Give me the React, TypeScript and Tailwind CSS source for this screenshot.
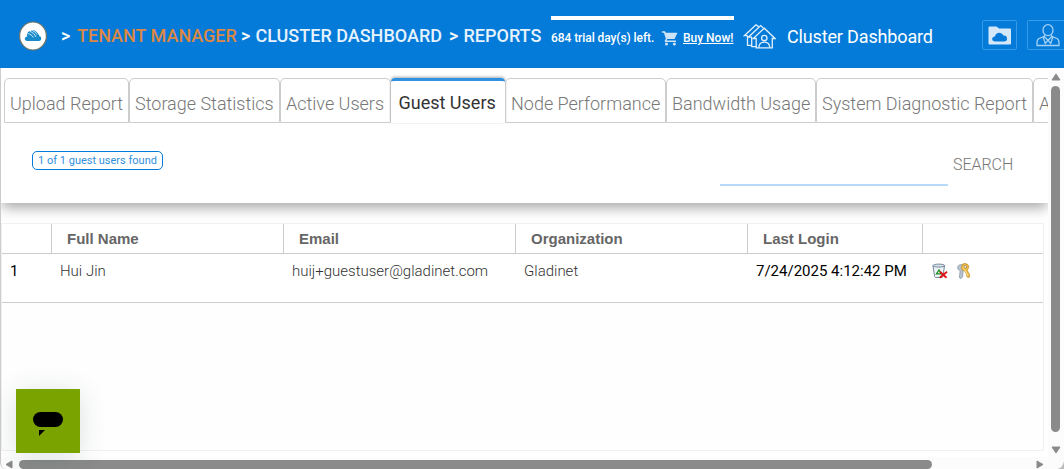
import React from "react";

const tabs = [
  { label: "Upload Report", width: "w-[125px]" },
  { label: "Storage Statistics", width: "w-[151px]" },
  { label: "Active Users", width: "w-[111px]" },
  { label: "Guest Users", width: "w-[114px]", active: true },
  { label: "Node Performance", width: "w-[161px]" },
  { label: "Bandwidth Usage", width: "w-[150px]" },
  { label: "System Diagnostic Report", width: "w-[217px]" },
  { label: "A", width: "w-[110px]" },
];

function Logo() {
  return (
    <svg width="28" height="30" viewBox="0 0 28 30" className="shrink-0">
      <ellipse cx="14" cy="15" rx="13.400" ry="14" fill="#fff" stroke="#6d7468" strokeWidth="1.200" />
      <path d="M8.300 20C4.800 20 5.200 15.600 8.200 15.500c-.8-3 1-5.800 3.700-5.500 1.300-1.300 3.700-1.100 5.100.4 2.500 2.300 3 3.100 3.500 4.900 2.200.2 2.600 4.700-.5 4.700Z" fill="#168acb" />
      <path d="M8.600 12.600c2.300.2 4.400 1.500 5.600 3.800M10.600 10.300c2.600.7 5.200 3 6.300 5.600M13.400 9.600c2 .8 3.500 2 4.700 4" fill="none" stroke="#fff" strokeWidth=".8" />
    </svg>
  );
}

function CartIcon() {
  return (
    <svg width="16" height="15" viewBox="0 0 16 15" className="shrink-0" fill="#cde4f8">
      <path d="M0 .3h3l.8 1.500h11.700l-3 6.200H5.200L4.500 9.500H14V11H3.100l-.5-1.200 1.300-2L1.900 1.700H0Z" />
      <circle cx="4.500" cy="13" r="1.500" />
      <circle cx="12.400" cy="13" r="1.500" />
    </svg>
  );
}

function HousesIcon() {
  return (
    <svg width="33" height="25" viewBox="0 0 33 25" className="shrink-0" fill="none" stroke="#e3f0fb" strokeWidth="1.300">
      <path d="M13.200 14.500h-3L21.300 4.200 32 14.500h-2.700v9.300H13.200Z" />
      <path d="M9 13.200H5.400L17.700 1.600l2.600 2.300M4.700 11.700H1.300L13 .8l2.500 1.800M4.500 12v9.300H9M8.700 13.200v9.500h4.500" />
      <circle cx="21.300" cy="14" r="2.700" />
      <path d="M15.800 23.600c.2-3.800 2.500-5.400 5.500-5.400s5.300 1.600 5.500 5.400" />
    </svg>
  );
}

function FolderIcon() {
  return (
    <svg width="23" height="19" viewBox="0 0 23 19">
      <path d="M1.500.5h7l2.500 2h11q1 0 1 1v14q0 1-1 1H1.500q-1 0-1-1v-16q0-1 1-1Z" fill="#d5e8f9" />
      <path d="M7.300 15.500c-4 0-4.200-4.500-.4-4.900C7.500 6.300 13.300 5 15.400 9.500c3-.1 4.200 2 3.500 4.300-.3 1.200-1.300 1.700-2.500 1.700Z" fill="#047bd9" />
    </svg>
  );
}

function PersonIcon() {
  return (
    <svg width="24" height="23" viewBox="0 0 24 23" fill="none" stroke="#a4d1f6" strokeWidth="1.300">
      <ellipse cx="12" cy="6.200" rx="5" ry="5.500" />
      <path d="M8.500 11v2l3.500 3.300 3.500-3.300v-2M8.500 12.300 3 14.500Q1 15.500 1 19v2.500h22V19q0-3.500-2-4.500l-5.500-2.200M7.300 13.500l2 6 2.700-3.200 2.700 3.200 2-6" />
    </svg>
  );
}

function DeleteIcon() {
  return (
    <svg width="16" height="16" viewBox="0 0 16 16" className="shrink-0">
      <path d="M1 2.800h11.500l-1.600 10.900-1 .8H3.600l-1-.8Z" fill="#eef3f6" stroke="#75879a" />
      <ellipse cx="6.800" cy="2.600" rx="5.900" ry="1.500" fill="#d5e1eb" stroke="#607388" strokeWidth=".8" />
      <path d="m7 7-2.500 3.800h4.800L7 7Z" fill="#fff" stroke="#168f20" strokeWidth="1.300" />
      <path d="m8 8.800 6.500 5.900M15 8.800 7.800 14.700" stroke="#df1418" strokeWidth="1.900" />
    </svg>
  );
}

function KeysIcon() {
  return (
    <svg width="16" height="16" viewBox="0 0 16 16" className="shrink-0">
      <path d="M7.500 2.200C4 .8 1.300 2.600 1.700 5c.2 1.500 1.400 2.400 2.500 2.600l-.8 7 1.400 1.100L6.600 14l.5-6.500L9 5Z" fill="#b8c5d0" stroke="#8495a3" strokeWidth=".8" />
      <path d="M7 .8c3.200-.8 5.600.5 5.700 2.900.1 1.600-.8 2.600-1.700 3.200l2.700 5.200-.2 2-1.700.4-1.100-1.600-.2-1.500-2-3.600C5.800 7.500 4.900 5.800 5.500 3.700Z" fill="#efbf45" stroke="#ba8429" strokeWidth=".7" />
      <path d="M7 3.500 8.500 6.500l3.500 6.500" fill="none" stroke="#ffe391" />
      <circle cx="9.300" cy="3.800" r="1.300" fill="#fff" stroke="#84632e" strokeWidth=".7" />
    </svg>
  );
}

function Header() {
  return (
    <header className="flex h-[68px] w-full shrink-0 overflow-hidden bg-[#047bd9] pl-[19px] text-white">
      <div className="flex h-[72px] w-[42px] shrink-0 items-center"><Logo /></div>
      <nav className="flex h-[71px] w-[490px] shrink-0 items-center whitespace-nowrap text-[18px] font-medium text-[#e6f2fc]">
        <span className="w-4 text-white">&gt;</span>
        <span className="w-[164px] text-[#dc8744]">TENANT MANAGER</span>
        <span className="w-[14.500px] text-white">&gt;</span>
        <span className="w-[193.500px]">CLUSTER DASHBOARD</span>
        <span className="w-[14.500px] text-white">&gt;</span>
        <span>REPORTS</span>
      </nav>
      <div className="mt-4 h-8 w-[183px] shrink-0 border-t-4 border-white">
        <div className="flex h-9 items-center whitespace-nowrap text-[12px] font-medium">
          <span className="w-[111px] tracking-[-0.070px]">684 trial day(s) left.</span>
          <CartIcon />
          <span className="ml-[5px] underline">Buy Now!</span>
        </div>
      </div>
      <div className="ml-[9px] flex h-[73px] w-[239px] shrink-0 items-center whitespace-nowrap text-[18px]">
        <HousesIcon />
        <span className="ml-[11px] tracking-[-0.150px]">Cluster Dashboard</span>
      </div>
      <div className="mt-5 flex h-[30px] w-[35px] shrink-0 items-center justify-center rounded-[2px] border border-[#359be7]"><FolderIcon /></div>
      <div className="mt-5 ml-[10px] flex h-[30px] w-[42px] shrink-0 items-center rounded-[2px] border border-[#359be7] pl-2"><PersonIcon /></div>
    </header>
  );
}

function Tabs() {
  return (
    <div className="flex h-[56px] w-full shrink-0 items-end overflow-hidden pl-[3px]">
      {tabs.map((tab) => (
        <div
          key={tab.label}
          className={`${tab.width} mb-px flex h-[45px] shrink-0 whitespace-nowrap text-[18px] ${tab.active ? "rounded-t-[4px] border-t-[3px] border-[#3092df] pl-[7.500px] pt-2 text-[#333] shadow-[0_-1px_3px_#aaa]" : "rounded-t-[5px] border border-[#ccc] pl-[5px] pt-[11px] font-light text-[#777]"}`}
        >
          {tab.label}
        </div>
      ))}
    </div>
  );
}

function GuestTable() {
  return (
    <section className="mt-5 flex h-[228px] w-[1043px] shrink-0 flex-col border border-[#f1f1f1] bg-[#fefefe] text-[15px]">
      <div className="grid h-[30px] shrink-0 grid-cols-[49px_232px_232px_232px_175px_1fr] border-b border-[#ccc] bg-white font-['Liberation_Sans'] font-bold leading-[30px] text-[#666]">
        <span />
        <span className="border-l border-[#ccc] pl-[15px]">Full Name</span>
        <span className="border-l border-[#ccc] pl-[15px]">Email</span>
        <span className="border-l border-[#ccc] pl-[15px]">Organization</span>
        <span className="border-l border-[#ccc] pl-[15px]">Last Login</span>
        <span className="border-l border-[#ccc]" />
      </div>
      <div className="grid h-[49px] shrink-0 grid-cols-[49px_232px_232px_232px_175px_1fr] border-b border-[#ccc] bg-white leading-[34px]">
        <span className="pl-2 text-black">1</span>
        <span className="pl-[9px] font-light text-[#333]">Hui Jin</span>
        <span className="pl-[9px] font-light text-[#333]">huij+guestuser@gladinet.com</span>
        <span className="pl-[9px] font-light text-[#333]">Gladinet</span>
        <span className="whitespace-nowrap pl-[9px] text-black">7/24/2025 4:12:42 PM</span>
        <span className="flex gap-2 pl-[10px] pt-[9px]"><DeleteIcon /><KeysIcon /></span>
      </div>
    </section>
  );
}

export default function App() {
  return (
    <div className="relative flex h-[469px] w-[1064px] flex-col overflow-hidden bg-[#fcfcfc] font-[Roboto]">
      <Header />
      <div className="flex h-[389px] shrink-0">
        <main className="flex w-[1048px] flex-col overflow-hidden border-l border-[#ccc] bg-white">
          <div className="relative flex h-[135px] shrink-0 flex-col bg-white shadow-[0_6px_12px_-1px_#aaa]">
            <Tabs />
            <div className="flex h-[79px]">
              <div className="ml-[31px] mt-[27px] h-[19px] w-[131px] rounded-[5px] border border-[#047bd9] text-center text-[11px] leading-[17px] text-[#2f8fdd]">1 of 1 guest users found</div>
              <div className="ml-[557px] mt-[40px] h-[22px] w-[228px] border-b-2 border-[#b6daf8]" />
              <span className="ml-[5px] mt-[29px] text-[16px] font-light tracking-[-0.050px] text-[#777]">SEARCH</span>
            </div>
          </div>
          <GuestTable />
        </main>
        <div className="flex w-4 flex-col items-center pt-[5px]">
          <svg width="10" height="8" viewBox="0 0 10 8"><path d="M5 1 9 7H1Z" fill="#8a8a8a" stroke="#8a8a8a" strokeLinejoin="round" /></svg>
          <div className="mr-px mt-[5px] h-[346px] w-[9px] rounded-full bg-[#8a8a8a]" />
          <svg className="mt-[14px]" width="10" height="8" viewBox="0 0 10 8"><path d="M1 1h8L5 7Z" fill="#8a8a8a" stroke="#8a8a8a" strokeLinejoin="round" /></svg>
        </div>
      </div>
      <div className="flex h-3 shrink-0 rounded-bl-[6px] border-l border-[#ccc] pl-1 pt-[3px]">
        <svg width="8" height="9" viewBox="0 0 8 9"><path d="M7 1v7L1 4.500Z" fill="#8a8a8a" stroke="#8a8a8a" strokeLinejoin="round" /></svg>
        <div className="ml-[6px] h-[9px] w-[913px] rounded-full bg-[#8a8a8a]" />
        <svg className="ml-[104px]" width="8" height="9" viewBox="0 0 8 9"><path d="M1 1v7l6-3.500Z" fill="#8a8a8a" stroke="#8a8a8a" strokeLinejoin="round" /></svg>
        <svg className="ml-[11px]" width="9" height="9" viewBox="0 0 9 9"><path d="M9 1q-1 7-7 8h7Z" fill="#bbb" /></svg>
      </div>
      <button aria-label="Open chat" className="absolute left-4 top-[389px] h-16 w-16 bg-[#7aa300] shadow-[0_4px_28px_rgba(0,50,50,0.14)]">
        <svg width="64" height="64" viewBox="0 0 64 64"><rect x="17" y="23" width="30" height="15" rx="7.500" /><path d="M23 41h6l-6 6Z" /></svg>
      </button>
    </div>
  );
}
